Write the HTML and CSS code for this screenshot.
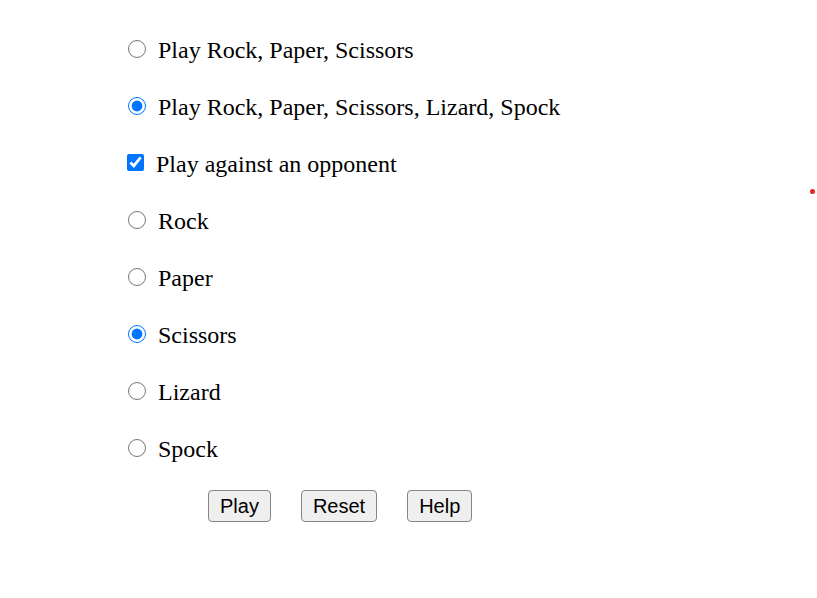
FILE: index.html
```html
<!DOCTYPE html>
<html>
<head>
<meta charset="utf-8">
<link rel="stylesheet" href="styles.css">
</head>
<body>
<div class="game">
  <label class="row"><input type="radio" name="mode" class="radio"><span class="label">Play Rock, Paper, Scissors</span></label>
  <label class="row"><input type="radio" name="mode" class="radio" checked><span class="label">Play Rock, Paper, Scissors, Lizard, Spock</span></label>
  <label class="row"><input type="checkbox" class="check" checked><span class="label">Play against an opponent</span></label>
  <label class="row"><input type="radio" name="pick" class="radio"><span class="label">Rock</span></label>
  <label class="row"><input type="radio" name="pick" class="radio"><span class="label">Paper</span></label>
  <label class="row"><input type="radio" name="pick" class="radio" checked><span class="label">Scissors</span></label>
  <label class="row"><input type="radio" name="pick" class="radio"><span class="label">Lizard</span></label>
  <label class="row"><input type="radio" name="pick" class="radio"><span class="label">Spock</span></label>
  <div class="buttons">
    <button class="btn">Play</button>
    <button class="btn">Reset</button>
    <button class="btn">Help</button>
  </div>
</div>
<div class="dot"></div>
</body>
</html>
```
FILE: styles.css
```css
html, body {
  margin: 0;
  padding: 0;
  background: #fff;
}
body {
  font-family: "Liberation Serif", "Times New Roman", serif;
  font-size: 24px;
  color: #000;
}
.game {
  display: flex;
  flex-direction: column;
  padding: 20px 0 0 127px;
}
.row {
  display: flex;
  align-items: center;
  height: 57px;
}
.label {
  padding-top: 4px;
}
.radio {
  width: 18px;
  height: 18px;
  margin: 0 12px 0 1px;
}
.check {
  width: 17px;
  height: 17px;
  margin: 0 12px 0 0;
}
.buttons {
  display: flex;
  gap: 30px;
  margin: 14px 0 0 81px;
}
.btn {
  font-family: "Liberation Sans", Arial, sans-serif;
  font-size: 20px;
  line-height: 23px;
  padding: 4px 11px 3px;
  background: #efefef;
  border: 1px solid #858585;
  border-radius: 4px;
  color: #000;
}
.dot {
  position: absolute;
  left: 810px;
  top: 189px;
  width: 5px;
  height: 5px;
  border-radius: 50%;
  background: #e0262b;
}
```
